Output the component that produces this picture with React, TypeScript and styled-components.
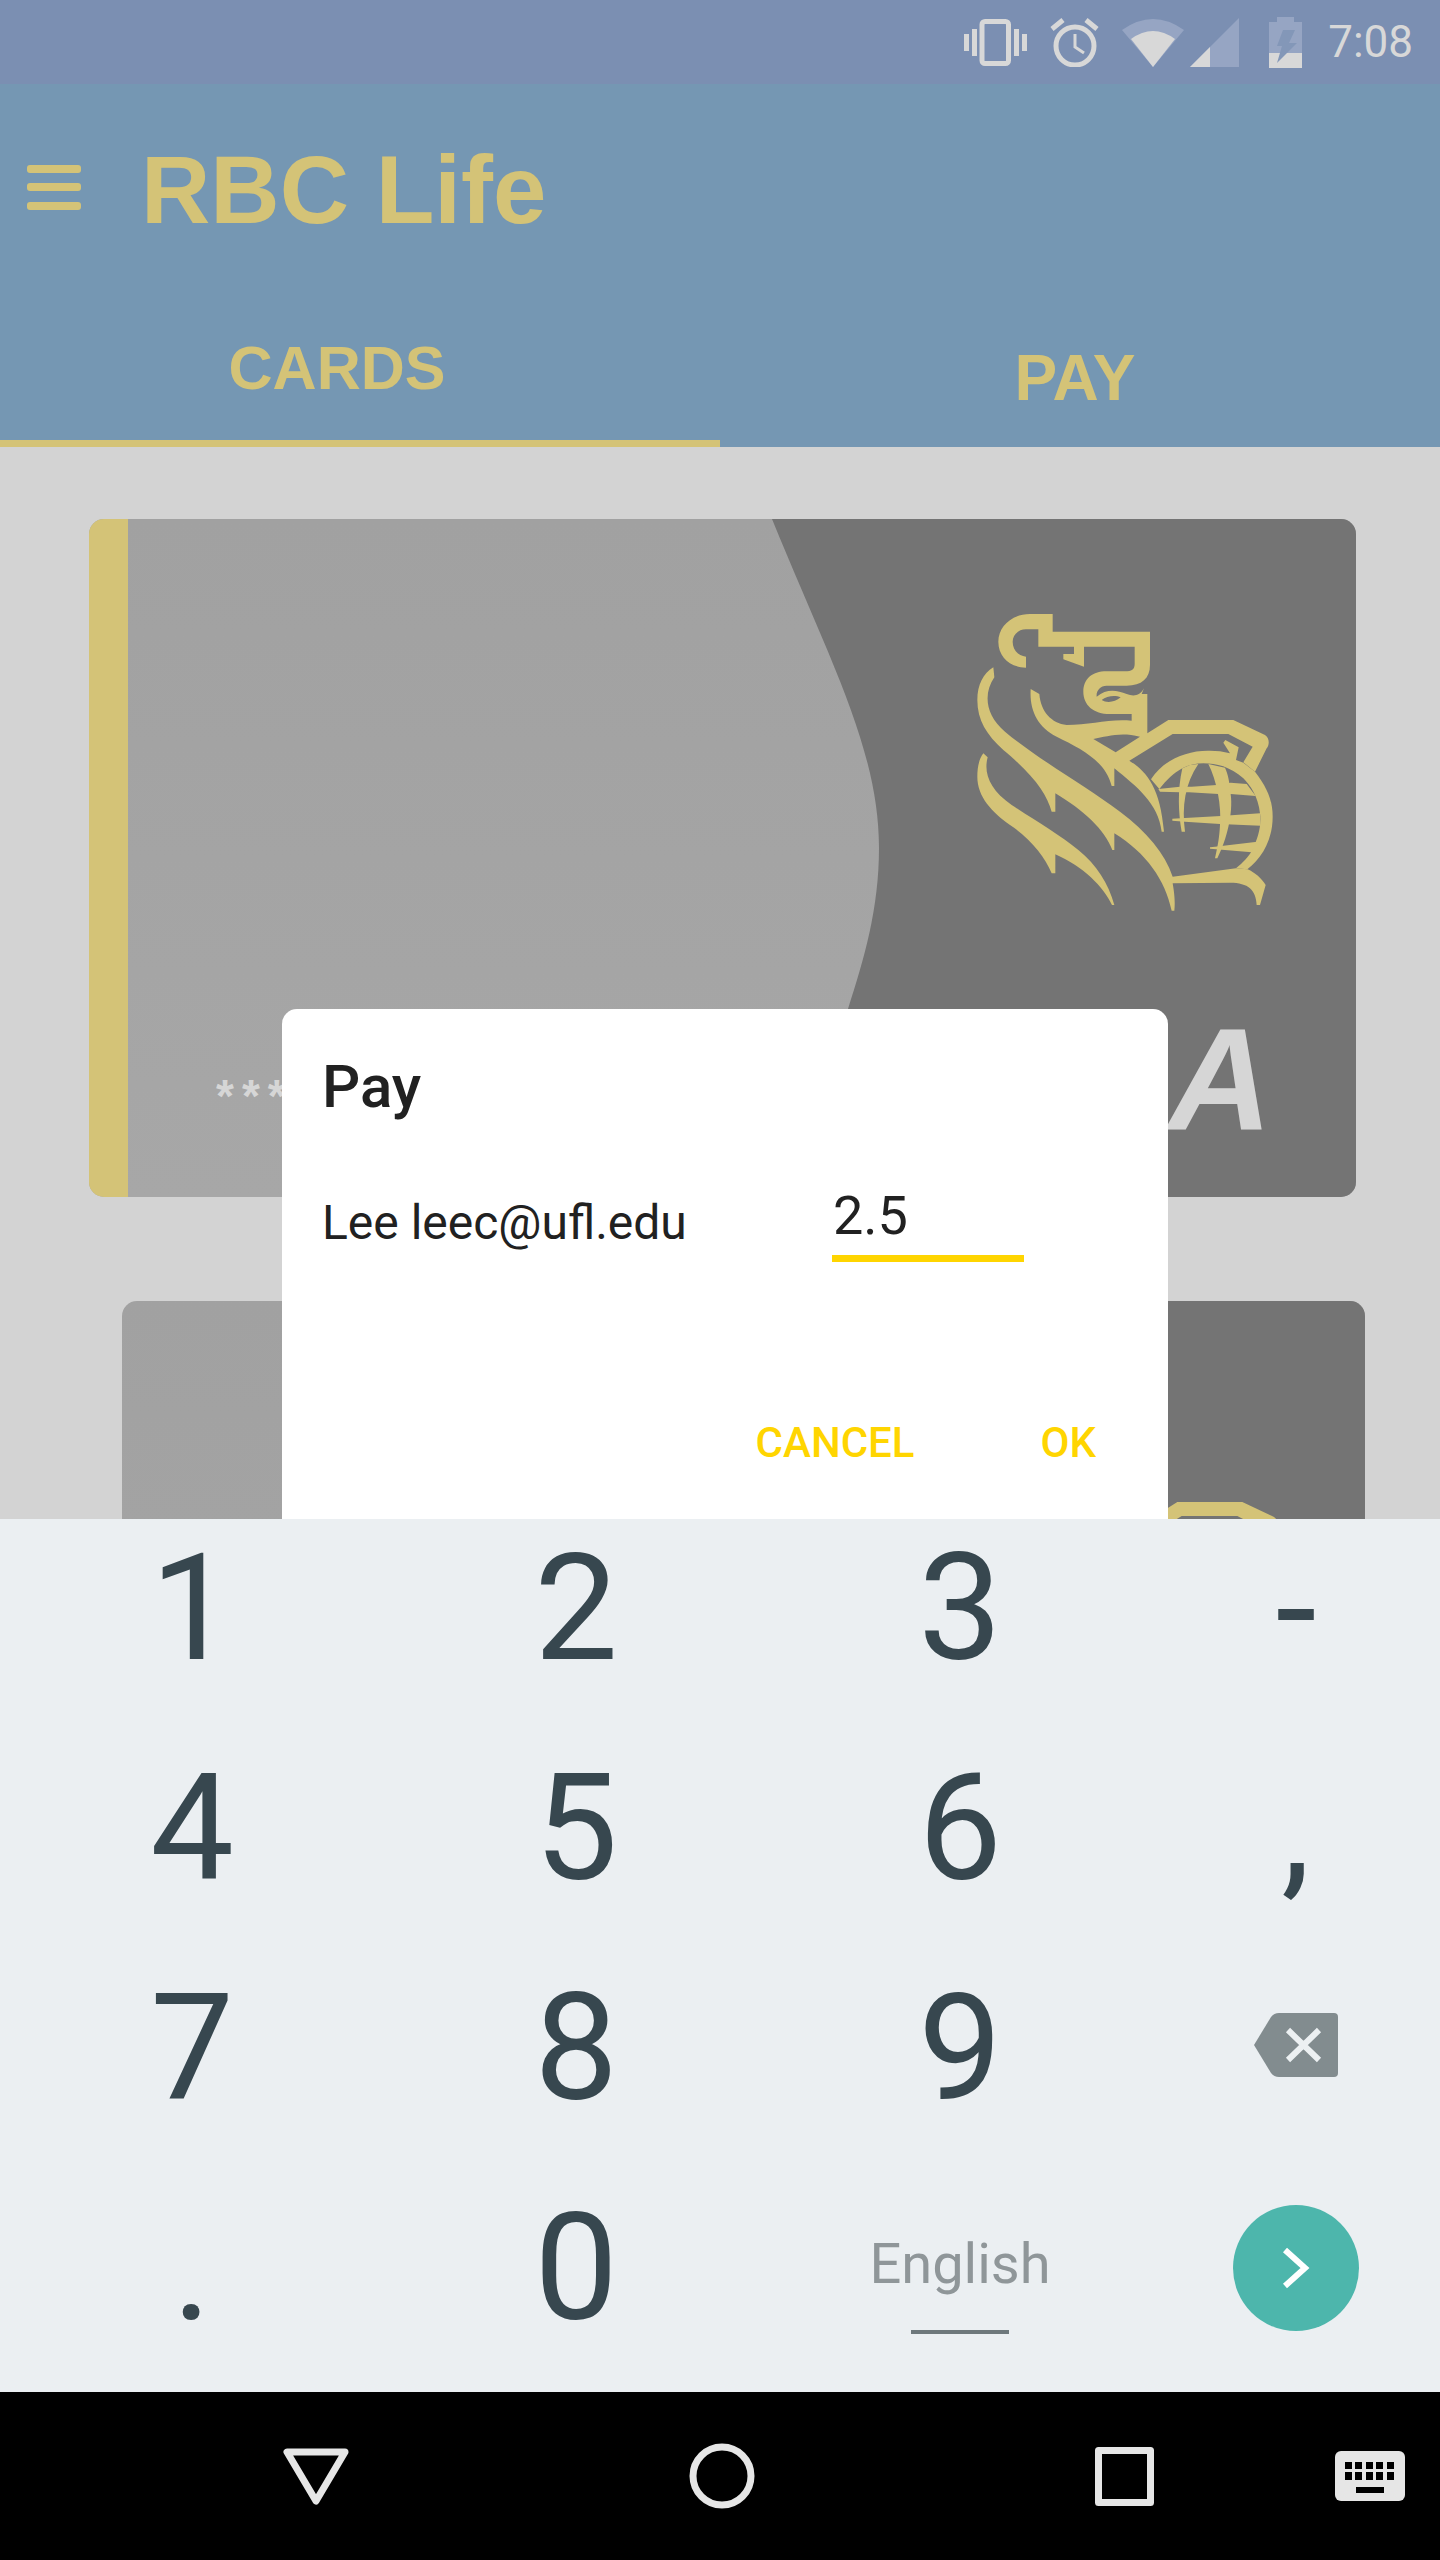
import React from 'react';
import styled, { createGlobalStyle } from 'styled-components';

const GOLD = '#d4c377';
const ACCENT = '#ffd500';

const GlobalStyle = createGlobalStyle`
  html, body {
    margin: 0;
    padding: 0;
    background: #000;
    font-family: Roboto, "Liberation Sans", sans-serif;
  }
`;

const Screen = styled.div`
  width: 1440px;
  height: 2560px;
  display: flex;
  flex-direction: column;
  overflow: hidden;
`;

const StatusBar = styled.div`
  height: 84px;
  flex: none;
  background: #7b8fb2;
  display: flex;
  align-items: center;
  justify-content: flex-end;
  padding-right: 27px;
  box-sizing: border-box;
`;

const StatusIcon = styled.svg<{ $gap: number }>`
  display: block;
  flex: none;
  margin-right: ${({ $gap }) => $gap}px;
`;

const Clock = styled.span`
  font-size: 44px;
  line-height: 84px;
  color: #d8d8d8;
`;

const AppBar = styled.header`
  height: 363px;
  flex: none;
  background: #7597b3;
  display: flex;
  flex-direction: column;
  box-sizing: border-box;
`;

const Toolbar = styled.div`
  height: 206px;
  flex: none;
  display: flex;
  align-items: center;
  padding-left: 27px;
  gap: 60px;
`;

const Title = styled.h1`
  margin: 0;
  padding-top: 6px;
  font-family: "Liberation Sans", Arial, sans-serif;
  font-size: 96px;
  font-weight: 700;
  color: ${GOLD};
`;

const Tabs = styled.div`
  flex: 1;
  display: flex;
`;

const Tab = styled.div<{ $active?: boolean; $shift: number; $top: number; $size: number }>`
  width: 720px;
  flex: none;
  box-sizing: border-box;
  display: flex;
  justify-content: center;
  padding-right: ${({ $shift }) => $shift}px;
  padding-top: ${({ $top }) => $top}px;
  font-family: "Liberation Sans", Arial, sans-serif;
  font-size: ${({ $size }) => $size}px;
  line-height: 68px;
  font-weight: 700;
  color: ${GOLD};
  border-bottom: 7px solid ${({ $active }) => ($active ? GOLD : 'transparent')};
`;

const Content = styled.main`
  position: relative;
  flex: 1;
  min-height: 0;
  overflow: hidden;
  background: #d3d3d3;
  padding-top: 72px;
  box-sizing: border-box;
  display: flex;
  flex-direction: column;
  gap: 104px;
`;

const Card = styled.section<{ $left: number; $width: number }>`
  position: relative;
  flex: none;
  height: 678px;
  margin-left: ${({ $left }) => $left}px;
  width: ${({ $width }) => $width}px;
  border-radius: 15px;
  overflow: hidden;
  background: linear-gradient(180deg, #a1a1a1, #a7a7a7);
  display: flex;
`;

const Stripe = styled.div`
  width: 39px;
  background: ${GOLD};
`;

const Swoosh = styled.svg`
  position: absolute;
  inset: 0;
  width: 100%;
  height: 100%;
`;

const Crest = styled.svg`
  position: absolute;
  top: 71px;
  right: 56px;
`;

const Brand = styled.span`
  position: absolute;
  right: 84px;
  bottom: 45px;
  font-family: "Liberation Sans", Arial, sans-serif;
  font-size: 144px;
  line-height: 144px;
  font-weight: 700;
  font-style: italic;
  color: #d6d6d6;
`;

const CardNumber = styled.span`
  position: absolute;
  left: 127px;
  top: 549px;
  font-family: "Liberation Sans", Arial, sans-serif;
  font-size: 46px;
  line-height: 56px;
  font-weight: 700;
  letter-spacing: 8px;
  white-space: nowrap;
  color: #d6d6d6;
`;

const Dialog = styled.div`
  position: absolute;
  left: 282px;
  top: 562px;
  width: 886px;
  height: 640px;
  box-sizing: border-box;
  background: #fff;
  border-radius: 15px 15px 0 0;
  padding: 44px 72px 0 40px;
  display: flex;
  flex-direction: column;
  color: #212121;
`;

const DialogTitle = styled.h2`
  margin: 0;
  font-size: 60px;
  line-height: 68px;
  font-weight: 500;
`;

const DialogBody = styled.div`
  display: flex;
  align-items: flex-start;
  margin-top: 56px;
`;

const Recipient = styled.span`
  width: 510px;
  flex: none;
  font-size: 48px;
  line-height: 60px;
  padding-top: 16px;
`;

const Amount = styled.div`
  width: 192px;
  height: 85px;
  box-sizing: border-box;
  padding: 8px 0 0 1px;
  font-size: 54px;
  line-height: 62px;
  border-bottom: 7px solid ${ACCENT};
`;

const DialogActions = styled.div`
  display: flex;
  justify-content: flex-end;
  gap: 126px;
  margin-top: 156px;
`;

const ActionButton = styled.button`
  border: none;
  background: none;
  padding: 0;
  font-family: Roboto, sans-serif;
  font-size: 42px;
  line-height: 50px;
  font-weight: 500;
  color: ${ACCENT};
`;

const Keyboard = styled.div`
  height: 873px;
  flex: none;
  box-sizing: border-box;
  padding-top: 1px;
  background: #ebeff2;
  display: grid;
  grid-template-columns: 384px 384px 384px 288px;
  grid-auto-rows: 176px;
  row-gap: 44px;
  color: #37474f;
`;

const Key = styled.div`
  display: flex;
  align-items: center;
  justify-content: center;
  font-size: 149px;
  line-height: 176px;
`;

const BackspaceIcon = styled.svg`
  margin-bottom: 6px;
`;

const LanguageKey = styled.div`
  display: flex;
  flex-direction: column;
  align-items: center;
  padding-top: 46px;
`;

const LanguageName = styled.span`
  font-size: 56px;
  line-height: 76px;
  color: #8f9699;
`;

const LanguageBar = styled.div`
  width: 98px;
  height: 4px;
  margin-top: 28px;
  background: #6e787c;
`;

const EnterButton = styled.div`
  width: 126px;
  height: 126px;
  border-radius: 50%;
  background: #4db6ac;
  display: flex;
  align-items: center;
  justify-content: center;
`;

const NavBar = styled.nav`
  height: 168px;
  flex: none;
  box-sizing: border-box;
  background: #000;
  display: flex;
  align-items: center;
  justify-content: space-between;
  padding: 0 35px 0 283px;
`;

const NavGroup = styled.div`
  display: flex;
  align-items: center;
  gap: 340px;
`;

const CREST_HEAD =
  'M308 72 L308 125 L600 125 L600 225 C600 265 575 287 530 287 L470 287 C450 287 438 303 440 320 C470 295 500 300 530 312 C550 320 570 318 582 295 L575 312 L592 312 L592 430 L655 390 L850 390 L945 435 C960 445 958 465 950 475 L915 545 L880 517 L908 470 L835 432 L668 432 L538 512 C590 545 630 590 642 725 L635 725 C625 640 560 590 493 535 L493 588 L485 588 C465 510 390 475 320 440 C262 410 238 360 242 297 L268 312 C272 365 305 400 350 405 C420 405 480 385 545 392 L545 372 L480 372 C430 372 400 345 400 305 C400 268 425 244 470 244 L525 244 C545 244 554 238 554 222 L554 170 L402 170 L402 230 L340 208 L340 192 L372 192 L372 170 L265 170 L265 118 L228 118 C205 118 188 135 188 155 C188 180 205 198 228 200 L228 233 C180 232 145 200 145 155 C145 110 185 72 240 72 Z M430 447 C470 440 510 425 570 440 L497 487 Z M455 330 C470 318 495 315 512 322 C495 337 470 340 455 330 Z';
const CREST_MANE =
  'M130 232 L133 262 C100 310 105 375 165 425 C260 505 410 590 510 665 C590 725 645 790 668 860 L858 835 L893 838 C915 848 935 865 947 885 L930 945 L920 945 C918 900 895 878 840 878 L668 880 C675 920 675 940 673 962 L665 962 C645 870 590 790 493 730 L493 780 L487 780 C465 720 400 660 316 610 L316 665 L305 665 C290 610 250 555 160 480 C110 435 82 390 82 330 C82 285 100 250 130 232 Z';
const CREST_TAIL =
  'M100 490 L113 502 C100 550 120 600 185 645 C260 695 330 735 385 780 C440 825 475 880 493 945 L486 945 C460 890 400 830 316 793 L316 850 L305 850 C285 800 240 745 180 705 C125 665 82 620 82 560 C82 530 88 505 100 490 Z';
const CREST_GLOBE =
  'M603 568 C640 510 710 480 780 482 C800 482 820 484 840 490 L820 458 L826 450 L866 472 L858 510 L880 518 L915 545 C950 590 968 630 968 680 C968 750 935 805 892 838 L858 835 C880 818 895 800 903 787 C925 745 935 705 930 670 C925 620 900 585 880 565 C840 530 800 520 760 520 C740 520 715 525 697 535 C670 550 650 570 628 597 Z';
const CREST_LINES = [
  'M625 597 L690 590 L725 590 L800 585 L842 578 L890 582 L917 618 L842 612 L805 612 L717 607 L690 607 L630 605 Z',
  'M667 686 L705 684 L812 678 L930 670 L932 707 L810 702 L705 695 L667 692 Z',
  'M780 772 L795 770 L922 755 L905 787 L780 776 Z',
  'M697 535 C682 600 685 670 695 725 L705 725 C695 650 705 580 745 522 L720 525 Z',
  'M775 522 C800 570 815 650 810 705 C808 740 805 760 795 805 L802 805 C830 750 850 670 842 612 C838 575 835 555 825 533 Z',
];

const CrestLogo: React.FC = () => (
  <Crest width="350" height="340" viewBox="0 0 1050 1020">
    <g fill={GOLD}>
      <path d={CREST_HEAD} fillRule="evenodd" />
      <path d={CREST_MANE} />
      <path d={CREST_TAIL} />
      <path d={CREST_GLOBE} />
      {CREST_LINES.map((d) => (
        <path key={d} d={d} />
      ))}
    </g>
  </Crest>
);

const CardArt: React.FC = () => (
  <>
    <Swoosh viewBox="0 0 1267 678" preserveAspectRatio="none">
      <path
        d="M683 0 C740 140 790 230 790 329 C790 390 775 440 759 490 C740 560 710 620 680 678 L1267 678 L1267 0 Z"
        fill="#747474"
      />
    </Swoosh>
    <CrestLogo />
    <CardNumber>**** **** ****</CardNumber>
    <Brand>VISA</Brand>
  </>
);

const StatusIcons: React.FC = () => (
  <>
    <StatusIcon $gap={23} width="63" height="47" viewBox="0 0 63 47" fill="#d8d8d8">
      <rect x="18" y="2.5" width="26.5" height="42" rx="3" fill="none" stroke="#d8d8d8" strokeWidth="5" />
      <rect x="8" y="10" width="5" height="27" />
      <rect x="0" y="15" width="5" height="17" />
      <rect x="50" y="10" width="5" height="27" />
      <rect x="58" y="15" width="5" height="17" />
    </StatusIcon>
    <StatusIcon $gap={23} width="49" height="49" viewBox="0 0 49 49" fill="none" stroke="#d8d8d8">
      <circle cx="25" cy="28" r="19" strokeWidth="5" />
      <path d="M2 11 L13 2 M36 2 L47 11" strokeWidth="5" />
      <path d="M25 16 L25 29 L34 35" strokeWidth="3" />
    </StatusIcon>
    <StatusIcon $gap={6} width="62" height="49" viewBox="0 0 62 49">
      <path d="M0 12 Q31 -10 62 12 L31 49 Z" fill="#96a5c3" />
      <path d="M9 21 Q31 5 53 21 L31 49 Z" fill="#d8d8d8" />
    </StatusIcon>
    <StatusIcon $gap={30} width="49" height="49" viewBox="0 0 49 49">
      <path d="M0 49 L49 0 L49 49 Z" fill="#96a5c3" />
      <path d="M0 49 L20 29 L20 49 Z" fill="#d8d8d8" />
    </StatusIcon>
    <StatusIcon $gap={26} width="33" height="51" viewBox="0 0 33 51">
      <path d="M8 0 L25 0 L25 5 L33 5 L33 51 L0 51 L0 5 L8 5 Z" fill="#96a5c3" />
      <rect x="0" y="36" width="33" height="15" fill="#d8d8d8" />
      <path d="M14 13 L26 13 L20 26 L28 26 L8 46 L13 29 L8 29 Z" fill="#8397b8" />
    </StatusIcon>
  </>
);

const Hamburger: React.FC = () => (
  <svg width="54" height="45" viewBox="0 0 54 45" fill={GOLD}>
    <rect x="0" y="0" width="54" height="8" rx="3" />
    <rect x="0" y="18" width="54" height="8" rx="3" />
    <rect x="0" y="37" width="54" height="8" rx="3" />
  </svg>
);

const keys = ['1', '2', '3', '-', '4', '5', '6', ',', '7', '8', '9'];

const App: React.FC = () => (
  <Screen>
    <GlobalStyle />
    <StatusBar>
      <StatusIcons />
      <Clock>7:08</Clock>
    </StatusBar>

    <AppBar>
      <Toolbar>
        <Hamburger />
        <Title>RBC Life</Title>
      </Toolbar>
      <Tabs>
        <Tab $active $shift={46} $top={44} $size={61}>CARDS</Tab>
        <Tab $shift={10} $top={54} $size={64}>PAY</Tab>
      </Tabs>
    </AppBar>

    <Content>
      <Card $left={89} $width={1267}>
        <Stripe />
        <CardArt />
      </Card>
      <Card $left={122} $width={1243}>
        <CardArt />
      </Card>
      <Dialog>
        <DialogTitle>Pay</DialogTitle>
        <DialogBody>
          <Recipient>Lee leec@ufl.edu</Recipient>
          <Amount>2.5</Amount>
        </DialogBody>
        <DialogActions>
          <ActionButton>CANCEL</ActionButton>
          <ActionButton>OK</ActionButton>
        </DialogActions>
      </Dialog>
    </Content>

    <Keyboard>
      {keys.map((k) => (
        <Key key={k}>{k}</Key>
      ))}
      <Key>
        <BackspaceIcon width="84" height="64" viewBox="0 0 84 64">
          <path
            d="M0 32 L17 4 Q20 0 25 0 L80 0 Q84 0 84 4 L84 60 Q84 64 80 64 L25 64 Q20 64 17 60 Z"
            fill="#828c8f"
          />
          <path d="M34 17 L65 47 M65 17 L34 47" stroke="#ecf0f2" strokeWidth="6" />
        </BackspaceIcon>
      </Key>
      <Key>.</Key>
      <Key>0</Key>
      <LanguageKey>
        <LanguageName>English</LanguageName>
        <LanguageBar />
      </LanguageKey>
      <Key>
        <EnterButton>
          <svg width="28" height="42" viewBox="0 0 28 42" fill="none" stroke="#fff" strokeWidth="6">
            <path d="M3 3 L23 21 L3 39" />
          </svg>
        </EnterButton>
      </Key>
    </Keyboard>

    <NavBar>
      <NavGroup>
        <svg width="66" height="57" viewBox="0 0 66 57" fill="none" stroke="#e6e6e6" strokeWidth="7" strokeLinejoin="round">
          <path d="M4 4 L62 4 L33 53 Z" />
        </svg>
        <svg width="66" height="66" viewBox="0 0 66 66" fill="none" stroke="#e6e6e6" strokeWidth="7">
          <circle cx="33" cy="33" r="29" />
        </svg>
        <svg width="59" height="59" viewBox="0 0 59 59" fill="none" stroke="#e6e6e6" strokeWidth="7" strokeLinejoin="round">
          <rect x="3.5" y="3.5" width="52" height="52" />
        </svg>
      </NavGroup>
      <svg width="70" height="50" viewBox="0 0 70 50">
        <rect width="70" height="50" rx="6" fill="#e6e6e6" />
        <path
          d="M10 11h7v7h-7z M20 11h7v7h-7z M31 11h7v7h-7z M41 11h7v7h-7z M52 11h7v7h-7z M10 21h7v8h-7z M20 21h7v8h-7z M31 21h7v8h-7z M41 21h7v8h-7z M52 21h7v8h-7z M21 36h28v6h-28z"
          fill="#000"
        />
      </svg>
    </NavBar>
  </Screen>
);

export default App;
